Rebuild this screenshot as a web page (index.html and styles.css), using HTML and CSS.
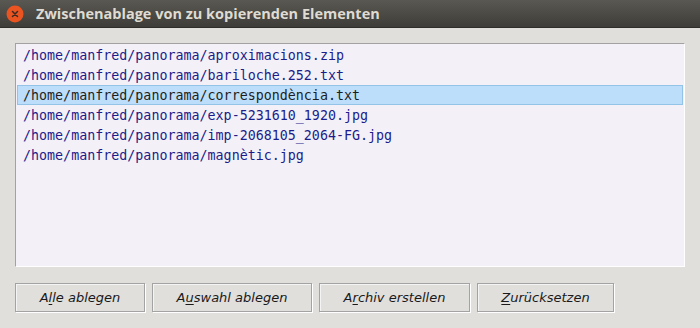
FILE: index.html
```html
<!DOCTYPE html>
<html lang="de">
<head>
<meta charset="UTF-8">
<title>Zwischenablage von zu kopierenden Elementen</title>
<link rel="stylesheet" href="styles.css">
</head>
<body>

<div class="window">
  <div class="titlebar">
    <span class="close">
      <svg width="18" height="18" viewBox="0 0 18 18">
        <circle cx="9" cy="9" r="8.5" fill="#e95420"/>
        <path d="M6.5 6.5 L11.5 11.5 M11.5 6.5 L6.5 11.5" stroke="#3b2a22" stroke-width="1.5" stroke-linecap="round"/>
      </svg>
    </span>
    <span class="title">Zwischenablage von zu kopierenden Elementen</span>
  </div>

  <div class="content">
    <ul class="filelist">
      <li>/home/manfred/panorama/aproximacions.zip</li>
      <li>/home/manfred/panorama/bariloche.252.txt</li>
      <li class="selected">/home/manfred/panorama/correspondència.txt</li>
      <li>/home/manfred/panorama/exp-5231610_1920.jpg</li>
      <li>/home/manfred/panorama/imp-2068105_2064-FG.jpg</li>
      <li>/home/manfred/panorama/magnètic.jpg</li>
    </ul>

    <div class="buttons">
      <button class="btn btn-all">A<u>l</u>le ablegen</button>
      <button class="btn btn-sel">A<u>u</u>swahl ablegen</button>
      <button class="btn btn-arc">A<u>r</u>chiv erstellen</button>
      <button class="btn btn-reset"><u>Z</u>urücksetzen</button>
    </div>
  </div>
</div>

</body>
</html>
```

FILE: styles.css
```css
body {
  margin: 0;
  padding: 0;
  width: 700px;
  height: 328px;
  overflow: hidden;
  background-color: #e0dfdc;
  font-family: "DejaVu Sans", sans-serif;
}
.window {
  display: flex;
  flex-direction: column;
  height: 328px;
}
.titlebar {
  height: 28px;
  display: flex;
  align-items: center;
  background: linear-gradient(#5a5852, #3e3d39);
  border-bottom: 1px solid #2f2e2b;
  box-sizing: border-box;
}
.close {
  width: 18px;
  height: 18px;
  margin-left: 6px;
  margin-top: 1px;
  display: flex;
}
.title {
  margin-left: 12px;
  font-family: "Open Sans", sans-serif;
  font-weight: bold;
  font-size: 14.5px;
  color: #dfdbd2;
}
.content {
  padding: 15px 15px 0 15px;
  display: flex;
  flex-direction: column;
}
.filelist {
  list-style: none;
  margin: 0;
  padding: 1px 1px 0 1px;
  height: 224px;
  box-sizing: border-box;
  background-color: #f3f1f7;
  border-top: 1px solid #a2a2a2;
  border-left: 1px solid #a2a2a2;
  border-right: 1px solid #ffffff;
  border-bottom: 1px solid #ffffff;
  font-family: "DejaVu Sans Mono", monospace;
  font-size: 13.33px;
  color: #1c1c8a;
}
.filelist li {
  height: 20px;
  line-height: 20px;
  padding-left: 5px;
  box-sizing: border-box;
  border: 1px solid transparent;
}
.filelist li.selected {
  background-color: #bcdefb;
  border-color: #93c4e8;
  color: #1e1e1e;
}
.buttons {
  display: flex;
  gap: 7px;
  margin-top: 16px;
}
.btn {
  height: 29px;
  padding: 0;
  background-color: #e0dfdc;
  border: 1px solid #a3a3a3;
  box-shadow: 1px 1px 0 #ffffff, inset 1px 1px 0 #f4f4f4;
  font-family: "DejaVu Sans", sans-serif;
  font-style: italic;
  font-size: 13px;
  color: #1a1a1a;
}
.btn u {
  text-underline-offset: 2px;
}
.btn-all { width: 130px; }
.btn-sel { width: 160px; }
.btn-arc { width: 151px; }
.btn-reset { width: 137px; }
```
